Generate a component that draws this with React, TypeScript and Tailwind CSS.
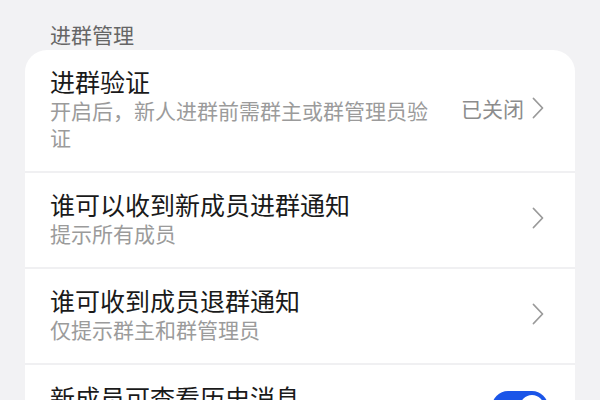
const font = { fontFamily: '"Noto Sans CJK SC", "Noto Sans", sans-serif' };

interface RowProps {
    title: string;
    desc?: string;
    value?: string;
}

function Chevron() {
    return (
        <svg width="12" height="22" viewBox="0 0 12 22" fill="none" stroke="#9a9a9a" strokeWidth="1.8" strokeLinecap="round" strokeLinejoin="round">
            <polyline points="1.5,1.5 10.5,11 1.5,20.5" />
        </svg>
    );
}

function Row({ title, desc, value }: RowProps) {
    return (
        <div className="flex items-center pt-[15px] pb-[20px] pl-[25px] pr-[31px] border-b-2 border-[#f0f0f2]">
            <div className="flex-1 flex flex-col">
                <div className="text-[25px] leading-[32px] text-[#1a1a1a]">{title}</div>
                {desc && <div className="text-[21px] leading-[27px] text-[#9b9b9b]">{desc}</div>}
            </div>
            <div className="flex items-center gap-[8px] pl-[20px]">
                {value && <span className="text-[21px] leading-[27px] text-[#8c8c8c]">{value}</span>}
                <Chevron />
            </div>
        </div>
    );
}

export default function App() {
    return (
        <div style={font} className="w-[600px] h-[400px] overflow-hidden bg-[#f2f2f4]">
            <div className="pt-[20px] pl-[50px] h-[50px] text-[21px] leading-[28px] text-[#666666]">进群管理</div>
            <div className="mx-[25px] bg-white rounded-[22px]">
                <Row title="进群验证" desc="开启后，新人进群前需群主或群管理员验证" value="已关闭" />
                <Row title="谁可以收到新成员进群通知" desc="提示所有成员" />
                <Row title="谁可收到成员退群通知" desc="仅提示群主和群管理员" />
                <div className="flex items-start pt-[16px] pl-[25px] pr-[27px] pb-[20px]">
                    <div className="flex-1 text-[25px] leading-[32px] text-[#1a1a1a]">新成员可查看历史消息</div>
                    <div className="mt-[10px] w-[56px] h-[32px] rounded-full bg-[#1b55e8] flex items-center justify-end pr-[2px]">
                        <div className="w-[28px] h-[28px] rounded-full bg-white border-2 border-[#1b55e8]" />
                    </div>
                </div>
            </div>
        </div>
    );
}
